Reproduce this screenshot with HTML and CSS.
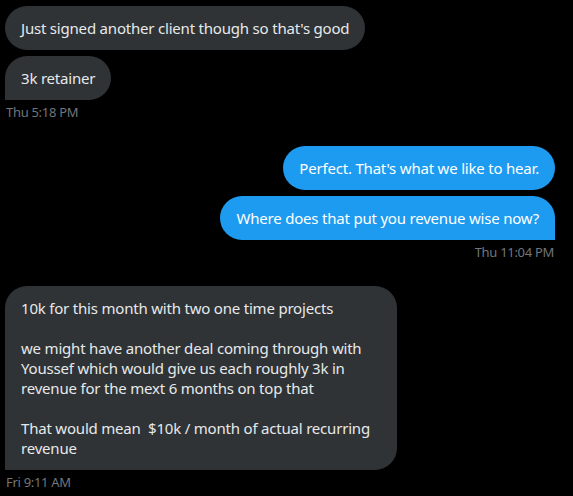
FILE: index.html
```html
<!DOCTYPE html>
<html>
<head>
<meta charset="utf-8">
<link rel="stylesheet" href="styles.css">
</head>
<body>
<div class="chat">
  <div class="group in">
    <div class="bubble">Just signed another client though so that's good</div>
    <div class="bubble last">3k retainer</div>
    <div class="time">Thu 5:18 PM</div>
  </div>
  <div class="group out">
    <div class="bubble">Perfect. That's what we like to hear.</div>
    <div class="bubble last">Where does that put you revenue wise now?</div>
    <div class="time">Thu 11:04 PM</div>
  </div>
  <div class="group in">
    <div class="bubble last wide">10k for this month with two one time projects

we might have another deal coming through with Youssef which would give us each roughly 3k in revenue for the mext 6 months on top that

That would mean  $10k / month of actual recurring revenue</div>
    <div class="time">Fri 9:11 AM</div>
  </div>
</div>
</body>
</html>
```
FILE: styles.css
```css
html, body {
  margin: 0;
  background: #000;
}
body {
  font-family: "Noto Sans", "Liberation Sans", sans-serif;
  color: #e7e9ea;
}
.chat {
  display: flex;
  flex-direction: column;
  gap: 26px;
  padding: 6px 18px 6px 5px;
}
.group {
  display: flex;
  flex-direction: column;
  gap: 6px;
}
.group.in { align-items: flex-start; }
.group.out { align-items: flex-end; }
.bubble {
  font-size: 15px;
  line-height: 20px;
  letter-spacing: -0.2px;
  padding: 12px 16px;
  border-radius: 22px;
  background: #2f3336;
  color: #e7e9ea;
  white-space: pre-wrap;
}
.out .bubble {
  background: #1d9bf0;
  color: #fff;
}
.in .bubble.last { border-bottom-left-radius: 0; }
.out .bubble.last { border-bottom-right-radius: 0; }
.bubble.wide {
  width: 360px;
}
.time {
  margin-top: -2px;
  font-size: 13px;
  line-height: 16px;
  letter-spacing: -0.3px;
  color: #71767b;
  padding: 0 1px;
}
```
